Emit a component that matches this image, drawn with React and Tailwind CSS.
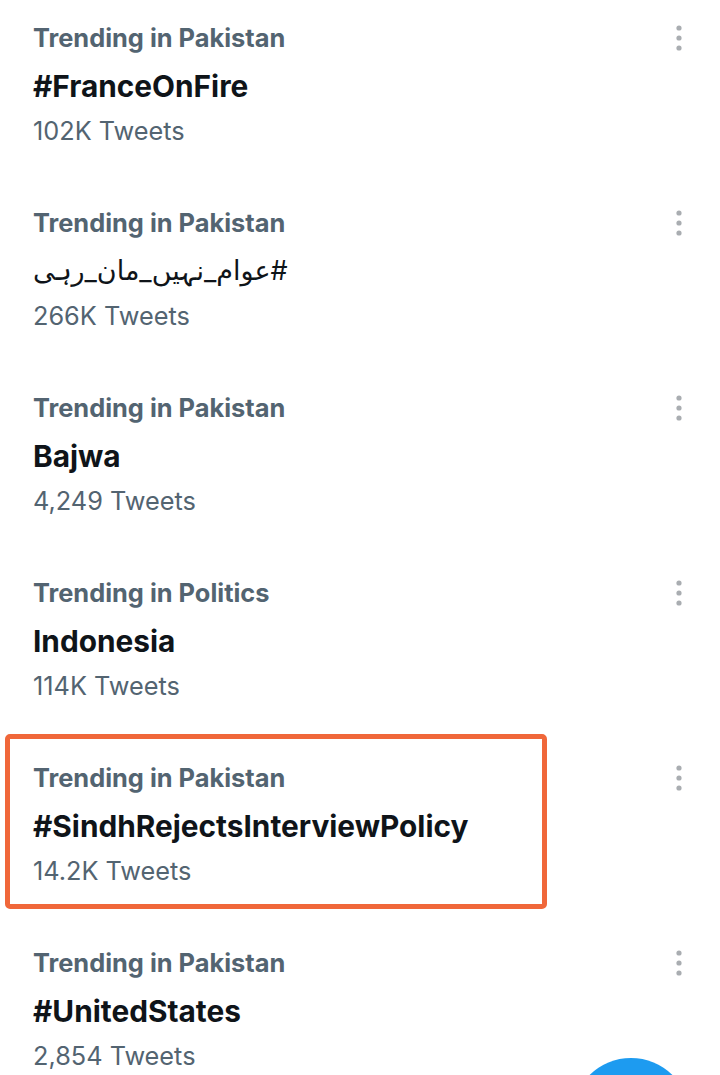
import { Fragment } from 'react'

const trends = [
  { label: 'Trending in Pakistan', title: '#FranceOnFire', count: '102K Tweets' },
  { label: 'Trending in Pakistan', title: '#عوام_نہیں_مان_رہی', count: '266K Tweets', rtl: true },
  { label: 'Trending in Pakistan', title: 'Bajwa', count: '4,249 Tweets' },
  { label: 'Trending in Politics', title: 'Indonesia', count: '114K Tweets' },
  { label: 'Trending in Pakistan', title: '#SindhRejectsInterviewPolicy', count: '14.2K Tweets', marked: true },
  { label: 'Trending in Pakistan', title: '#UnitedStates', count: '2,854 Tweets' },
]

function MoreDots() {
  return (
    <svg width="8" height="26" viewBox="0 0 8 26" className="text-[#a9adb1]">
      <circle cx="4" cy="3" r="2.6" fill="currentColor" />
      <circle cx="4" cy="13" r="2.6" fill="currentColor" />
      <circle cx="4" cy="23" r="2.6" fill="currentColor" />
    </svg>
  )
}

function TrendRow({ trend }) {
  return (
    <div className="relative flex h-[185px] items-start pl-[33px] pr-[37px] pt-[20px]">
      {/* 강조 박스 */}
      {trend.marked && (
        <div className="absolute left-[5px] top-[-6px] h-[175px] w-[542px] rounded-[5px] border-[5px] border-[#f0673a]" />
      )}
      <div className="flex-1">
        <div className="h-[36px] text-[25.4px] font-bold leading-[36px] text-[#536471]">{trend.label}</div>
        {trend.rtl ? (
          <div dir="rtl" className="mt-[10px] h-[40px] text-left text-[27px] font-normal leading-[40px] text-[#0f1419]">
            {trend.title}
          </div>
        ) : (
          <div className="mt-[10px] h-[40px] text-[29.8px] font-bold leading-[40px] text-[#0f1419]">{trend.title}</div>
        )}
        <div className="mt-[7px] h-[36px] text-[25.3px] leading-[36px] text-[#536471]">{trend.count}</div>
      </div>
      <div className="pt-[5px]">
        <MoreDots />
      </div>
    </div>
  )
}

export default function App() {
  return (
    <div className="relative h-[1075px] w-[720px] overflow-hidden bg-white font-['Inter','DejaVu_Sans',sans-serif]">
      {trends.map((t, i) => (
        <Fragment key={i}>
          <TrendRow trend={t} />
        </Fragment>
      ))}
      {/* 작성 버튼 */}
      <div className="absolute left-[572px] top-[1058px] h-[118px] w-[118px] rounded-full bg-[#1d9bf0]" />
    </div>
  )
}
